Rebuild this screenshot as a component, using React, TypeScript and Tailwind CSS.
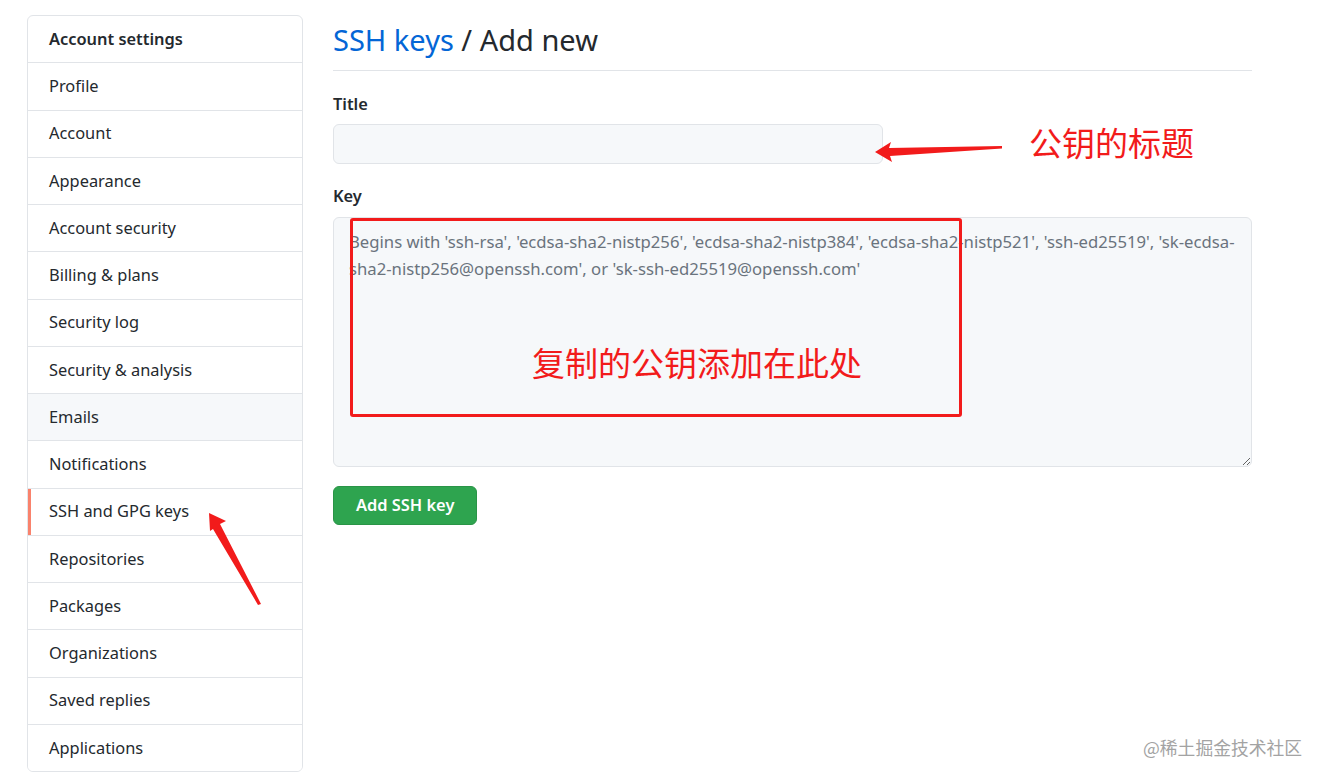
import React from "react";

const items = [
  "Profile",
  "Account",
  "Appearance",
  "Account security",
  "Billing & plans",
  "Security log",
  "Security & analysis",
  "Emails",
  "Notifications",
  "SSH and GPG keys",
  "Repositories",
  "Packages",
  "Organizations",
  "Saved replies",
  "Applications",
];

const font = { fontFamily: '"Noto Sans", "Noto Sans CJK SC", sans-serif' };
const cjk = { fontFamily: '"Noto Sans CJK SC", sans-serif' };

const SideMenu = () => {
  return (
    <nav className="w-[276px] shrink-0 rounded-md border border-[#e1e4e8] overflow-hidden bg-white">
      <div className="h-[46.25px] flex items-center px-[21px] text-[16.4px] font-semibold text-[#24292e]">
        Account settings
      </div>
      {items.map((name) => (
        <div
          key={name}
          className={
            "relative h-[47.25px] border-t border-[#e1e4e8] flex items-center px-[21px] text-[16.4px] text-[#24292e] " +
            (name === "Emails" ? "bg-[#f6f8fa]" : "bg-white")
          }
        >
          {name === "SSH and GPG keys" && (
            <span className="absolute left-0 top-0 bottom-0 w-[3px] bg-[#f9826c]" />
          )}
          {name}
        </div>
      ))}
    </nav>
  );
};

export default function App() {
  return (
    <div className="relative w-[1325px] h-[780px] bg-white overflow-hidden" style={font}>
      <div className="flex gap-[30px] pt-[15px] pl-[27px]">
        <SideMenu />

        <main className="w-[919px] flex flex-col items-start">
          {/* Heading */}
          <div className="self-stretch h-[56px] border-b border-[#e1e4e8] leading-[49px] text-[29px] text-[#24292e]">
            <span className="text-[#0366d6]">SSH keys</span> / Add new
          </div>

          {/* Title */}
          <label className="mt-[23px] leading-[20px] text-[16.4px] font-semibold text-[#24292e]">
            Title
          </label>
          <input
            className="mt-[10px] w-[550px] h-[40px] rounded-md border border-[#e1e4e8] bg-[#f6f8fa] px-3 outline-none"
            type="text"
          />

          {/* Key */}
          <label className="mt-[22px] leading-[20px] text-[16.4px] font-semibold text-[#24292e]">
            Key
          </label>
          <div className="relative self-stretch mt-[11px]">
            <textarea
              className="block w-full h-[250px] rounded-md border border-[#e1e4e8] bg-[#f6f8fa] pl-[15px] pr-[10px] pt-[10px] text-[16.7px] leading-[27px] text-[#24292e] placeholder:text-[#6a737d] outline-none"
              placeholder={
                "Begins with 'ssh-rsa', 'ecdsa-sha2-nistp256', 'ecdsa-sha2-nistp384', 'ecdsa-sha2-nistp521', 'ssh-ed25519', 'sk-ecdsa-\nsha2-nistp256@openssh.com', or 'sk-ssh-ed25519@openssh.com'"
              }
            />
            {/* annotation box */}
            <div className="absolute left-[17px] top-[1px] w-[612px] h-[199px] border-[3px] border-[#f21b1b] rounded-[3px] pointer-events-none" />
            <div
              className="absolute left-[199px] top-[124px] text-[33px] leading-[42px] text-[#f21b1b] whitespace-nowrap pointer-events-none"
              style={cjk}
            >
              复制的公钥添加在此处
            </div>
          </div>

          <button className="mt-[19px] h-[39px] px-[22px] rounded-md bg-[#2ea44f] border border-[#2a9447] text-white text-[16.4px] font-semibold">
            Add SSH key
          </button>
        </main>
      </div>

      {/* annotation: title */}
      <div
        className="absolute left-[1029px] top-[121px] text-[33px] leading-[42px] text-[#f21b1b] whitespace-nowrap"
        style={cjk}
      >
        公钥的标题
      </div>

      {/* arrows */}
      <svg className="absolute left-0 top-0 pointer-events-none" width="1325" height="780">
        <polygon
          points="875,152 891,142 889,148 1002,146 1002,148.5 890,156 892,162"
          fill="#f21b1b"
        />
        <polygon
          points="209,513 226,521 220,524 261,604 258,605 213,529 210,531"
          fill="#f21b1b"
        />
      </svg>

      {/* watermark */}
      <div
        className="absolute left-[1143px] top-[736px] text-[17.8px] leading-[22px] text-[#a3a3a3] whitespace-nowrap"
        style={cjk}
      >
        @稀土掘金技术社区
      </div>
    </div>
  );
}
